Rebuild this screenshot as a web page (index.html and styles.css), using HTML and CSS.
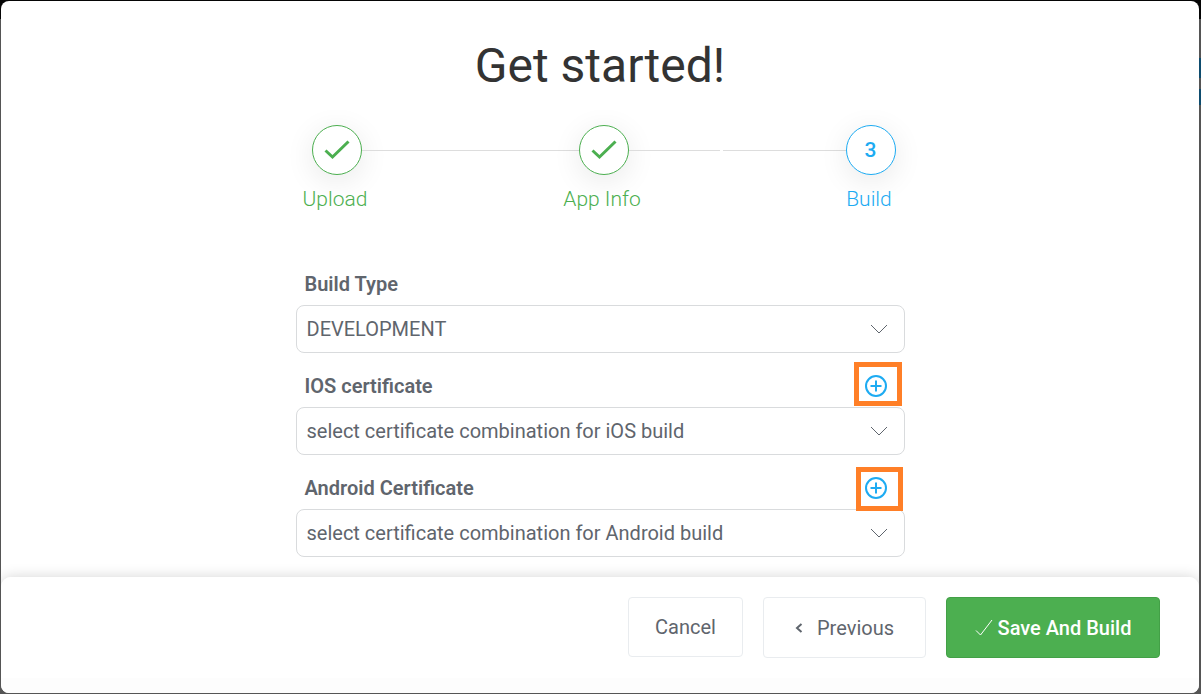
FILE: index.html
```html
<!DOCTYPE html>
<html lang="en">
<head>
<meta charset="utf-8">
<meta name="viewport" content="width=device-width, initial-scale=1">
<title>Get started!</title>
<link rel="stylesheet" href="styles.css">
</head>
<body>
<main class="dialog">
  <div class="dialog-body">
    <h1 class="title">Get started!</h1>

    <ol class="steps">
      <li class="step done">
        <span class="step-circle"><svg width="26" height="20" viewBox="0 0 26 20" aria-hidden="true"><path d="M1.5 10.5 L8.5 17 L24.5 1.5"/></svg></span>
        <span class="step-label">Upload</span>
      </li>
      <li class="connector" aria-hidden="true"><span class="line"></span></li>
      <li class="step done">
        <span class="step-circle"><svg width="26" height="20" viewBox="0 0 26 20" aria-hidden="true"><path d="M1.5 10.5 L8.5 17 L24.5 1.5"/></svg></span>
        <span class="step-label">App Info</span>
      </li>
      <li class="connector" aria-hidden="true"><span class="line short"></span><span class="line long"></span></li>
      <li class="step current" aria-current="step">
        <span class="step-circle">3</span>
        <span class="step-label">Build</span>
      </li>
    </ol>

    <form class="form" id="build-form">
      <div class="field">
        <div class="field-head"><label for="build-type">Build Type</label></div>
        <div class="select-box">
          <select id="build-type"><option>DEVELOPMENT</option></select>
          <svg class="chevron" width="18" height="10" viewBox="0 0 18 10" aria-hidden="true"><path d="M1 1 L9 9 L17 1"/></svg>
        </div>
      </div>
      <div class="field">
        <div class="field-head">
          <label for="ios-cert">IOS certificate</label>
          <button class="add" type="button" aria-label="Add IOS certificate">
            <svg width="22" height="22" viewBox="0 0 22 22" aria-hidden="true"><circle cx="11" cy="11" r="10"/><path d="M11 5.500V16.500M5.500 11H16.500"/></svg>
            <span class="highlight highlight-ios"></span>
          </button>
        </div>
        <div class="select-box">
          <select id="ios-cert"><option>select certificate combination for iOS build</option></select>
          <svg class="chevron" width="18" height="10" viewBox="0 0 18 10" aria-hidden="true"><path d="M1 1 L9 9 L17 1"/></svg>
        </div>
      </div>
      <div class="field">
        <div class="field-head">
          <label for="android-cert">Android Certificate</label>
          <button class="add" type="button" aria-label="Add Android certificate">
            <svg width="22" height="22" viewBox="0 0 22 22" aria-hidden="true"><circle cx="11" cy="11" r="10"/><path d="M11 5.500V16.500M5.500 11H16.500"/></svg>
            <span class="highlight highlight-android"></span>
          </button>
        </div>
        <div class="select-box">
          <select id="android-cert"><option>select certificate combination for Android build</option></select>
          <svg class="chevron" width="18" height="10" viewBox="0 0 18 10" aria-hidden="true"><path d="M1 1 L9 9 L17 1"/></svg>
        </div>
      </div>
    </form>
  </div>

  <footer class="dialog-footer">
    <button class="btn cancel" type="button">Cancel</button>
    <button class="btn previous" type="button"><svg width="8" height="10" viewBox="0 0 8 10" aria-hidden="true"><path d="M6.500 1 L2 5 L6.500 9"/></svg>Previous</button>
    <button class="btn primary" type="submit" form="build-form"><svg width="18" height="18" viewBox="0 0 18 18" aria-hidden="true"><path d="M1 11.500 L5.500 16 L17 1"/></svg>Save And Build</button>
  </footer>
</main>
</body>
</html>
```

FILE: styles.css
```css
* {
  box-sizing: border-box;
}

body {
  margin: 0;
  min-height: 100vh;
  padding: 1px 2px 1px 1px;
  display: flex;
  font-family: Roboto, "Liberation Sans", sans-serif;
  font-size: 20px;
  color: #5f656d;
  background:
    linear-gradient(#0e4c6e, #0e4c6e) right 58px / 2px 20px no-repeat,
    linear-gradient(#0e4c6e, #0e4c6e) right 89px / 2px 16px no-repeat,
    linear-gradient(#050505 19px, #555 19px);
}

.dialog {
  flex: 1;
  display: flex;
  flex-direction: column;
  background: #fff;
  border-radius: 8px;
  overflow: hidden;
}

.dialog-body {
  flex: 1;
  padding: 37px 20px 20px;
}

.title {
  margin: 0;
  font-size: 48px;
  line-height: 56px;
  font-weight: 400;
  text-align: center;
  color: #333;
}

.steps {
  list-style: none;
  max-width: 609px;
  margin: 31px auto 0;
  padding: 0 9px 0 16px;
  display: flex;
}

.step {
  width: 50px;
  display: flex;
  flex-direction: column;
  align-items: center;
}

.step-circle {
  width: 50px;
  height: 50px;
  display: grid;
  place-items: center;
  border: 1px solid currentColor;
  border-radius: 50%;
  background: #fff;
  box-shadow: 0 6px 30px rgba(0, 0, 0, 0.09);
}

.step-circle svg {
  fill: none;
  stroke: currentColor;
  stroke-width: 3;
}

.step-label {
  margin-top: 12px;
  padding-right: 3px;
  font-size: 21px;
  line-height: 24px;
  font-weight: 300;
  white-space: nowrap;
}

.done {
  color: #4caf50;
}

.current {
  color: #1dabf2;
}

.current .step-circle {
  font-size: 21px;
  font-weight: 500;
}

.connector {
  flex: 1;
  height: 50px;
  display: flex;
  align-items: center;
  gap: 3px;
}

.line {
  flex: 1;
  height: 1px;
  background: #ddd;
}

.line.short {
  flex: 3;
}

.line.long {
  flex: 4;
}

.form {
  max-width: 609px;
  margin: 40px auto 0;
}

.field-head {
  height: 54px;
  padding: 12px 18px 0 9px;
  display: flex;
  align-items: center;
  justify-content: space-between;
}

.field-head label {
  font-weight: 600;
}

.add {
  position: relative;
  display: flex;
  padding: 0;
  border: 0;
  background: none;
  color: #1dabf2;
}

.add svg {
  fill: none;
  stroke: currentColor;
  stroke-width: 2;
}

.highlight {
  position: absolute;
  z-index: 1;
  height: 44px;
  border: 5px solid #ff7f27;
  pointer-events: none;
}

.highlight-ios {
  top: -13px;
  left: -11px;
  width: 48px;
}

.highlight-android {
  top: -10px;
  left: -9px;
  width: 47px;
}

.select-box {
  display: grid;
  align-items: center;
}

.select-box > * {
  grid-area: 1 / 1;
}

.select-box select {
  appearance: none;
  width: 100%;
  height: 48px;
  padding: 0 40px 0 10px;
  border: 1px solid #d9dbdd;
  border-radius: 8px;
  background: #fff;
  font: inherit;
  color: inherit;
}

.chevron {
  justify-self: end;
  margin-right: 17px;
  fill: none;
  stroke: #5f656d;
  pointer-events: none;
}

.dialog-footer {
  position: relative;
  display: flex;
  justify-content: flex-end;
  gap: 20px;
  padding: 20px 39px 35px 20px;
  background: linear-gradient(to top, #fdfdfd 15px, #fff 15px);
  border-radius: 10px 10px 0 0;
  box-shadow: 0 0 14px rgba(0, 0, 0, 0.17);
}

.btn {
  height: 61px;
  display: flex;
  align-items: center;
  justify-content: center;
  padding: 0 24px;
  border: 1px solid #e9ecef;
  border-radius: 4px;
  background: #fff;
  font: inherit;
  color: inherit;
  white-space: nowrap;
}

.btn svg {
  fill: none;
  stroke: currentColor;
}

.cancel {
  width: 115px;
  height: 60px;
}

.previous {
  width: 163px;
  gap: 14px;
}

.previous svg {
  stroke-width: 2;
}

.primary {
  width: 214px;
  gap: 5px;
  border-color: #43a047;
  background: #4caf50;
  color: #fff;
  font-weight: 500;
}
```
